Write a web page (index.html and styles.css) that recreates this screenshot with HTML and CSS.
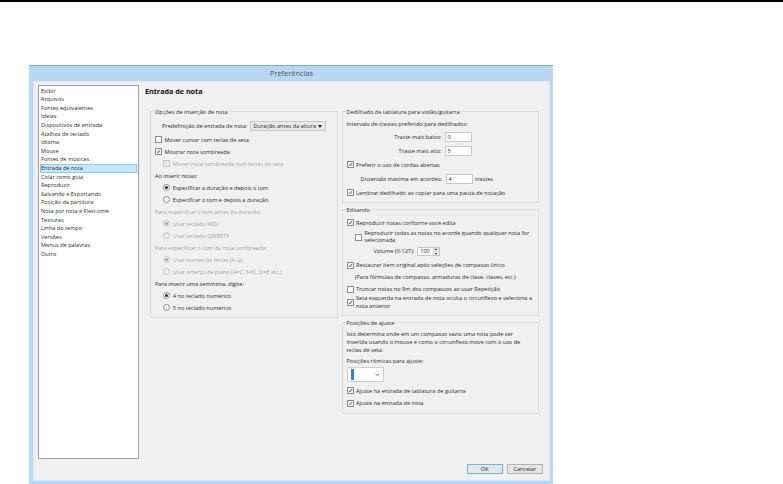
FILE: index.html
```html
<!DOCTYPE html>
<html lang="pt">
<head>
    <meta charset="UTF-8">
    <meta name="viewport" content="width=device-width, initial-scale=1.0">
    <title>Preferências</title>
    <link rel="stylesheet" href="styles.css">
</head>
<body>
    <div class="top-bar"></div>
    <div class="window">
        <div class="title-bar">Preferências</div>
        <div class="client">
            <div class="main">
                <ul class="nav-list">
                    <li>Exibir</li>
                    <li>Arquivos</li>
                    <li>Fontes equivalentes</li>
                    <li>Ideias</li>
                    <li>Dispositivos de entrada</li>
                    <li>Atalhos de teclado</li>
                    <li>Idioma</li>
                    <li>Mouse</li>
                    <li>Fontes de músicas</li>
                    <li class="selected">Entrada de nota</li>
                    <li>Colar como guia</li>
                    <li>Reproduzir</li>
                    <li>Salvando e Exportando</li>
                    <li>Posição da partitura</li>
                    <li>Nota por nota e Flexi-time</li>
                    <li>Texturas</li>
                    <li>Linha do tempo</li>
                    <li>Versões</li>
                    <li>Menus de palavras</li>
                    <li>Outro</li>
                </ul>
                <div class="page">
                    <h1>Entrada de nota</h1>
                    <div class="columns">
                        <fieldset class="group group-left">
                            <legend>Opções de inserção de nota</legend>
                            <div class="row preset-row">
                                <span>Predefinição de entrada de nota:</span>
                                <span class="combo">Duração antes da altura<i class="arrow"></i></span>
                            </div>
                            <div class="row"><span class="check"></span>Mover cursor com teclas de seta</div>
                            <div class="row"><span class="check on"><svg viewBox="0 0 7 7"><path d="M1.4 3.6 2.9 5.2 5.6 1.6"/></svg></span>Mostrar nota sombreada</div>
                            <div class="row indent-1 off"><span class="check"></span>Mover nota sombreada com teclas de seta</div>
                            <div class="row">Ao inserir notas:</div>
                            <div class="row indent-1"><span class="radio on"></span>Especificar a duração e depois o tom</div>
                            <div class="row indent-1"><span class="radio"></span>Especificar o tom e depois a duração</div>
                            <div class="row off">Para especificar o tom antes da duração:</div>
                            <div class="row indent-1 off"><span class="radio on"></span>Usar teclado MIDI</div>
                            <div class="row indent-1 off"><span class="radio"></span>Usar teclado QWERTY</div>
                            <div class="row off">Para especificar o tom da nota sombreada:</div>
                            <div class="row indent-1 off"><span class="radio on"></span>Usar nomes de letras (A-G)</div>
                            <div class="row indent-1 off"><span class="radio"></span>Usar arranjo de piano (A=C, S=D, D=E etc.)</div>
                            <div class="row">Para inserir uma semínima, digite:</div>
                            <div class="row indent-1"><span class="radio on"></span>4 no teclado numérico</div>
                            <div class="row indent-1"><span class="radio"></span>5 no teclado numérico</div>
                        </fieldset>
                        <div class="right-col">
                            <fieldset class="group group-tab">
                                <legend>Dedilhado de tablatura para violão/guitarra</legend>
                                <div class="row">Intervalo de trastes preferido para dedilhados:</div>
                                <div class="row tall field-row"><span>Traste mais baixo:</span><span class="field">0</span></div>
                                <div class="row tall field-row"><span>Traste mais alto:</span><span class="field">5</span></div>
                                <div class="row tall"><span class="check on"><svg viewBox="0 0 7 7"><path d="M1.4 3.6 2.9 5.2 5.6 1.6"/></svg></span>Preferir o uso de cordas abertas</div>
                                <div class="row tall stretch-row"><span>Distensão máxima em acordes:</span><span class="field">4</span><span>trastes</span></div>
                                <div class="row tall"><span class="check on"><svg viewBox="0 0 7 7"><path d="M1.4 3.6 2.9 5.2 5.6 1.6"/></svg></span>Lembrar dedilhado ao copiar para uma pauta de notação</div>
                            </fieldset>
                            <fieldset class="group group-edit">
                                <legend>Editando</legend>
                                <div class="row"><span class="check on"><svg viewBox="0 0 7 7"><path d="M1.4 3.6 2.9 5.2 5.6 1.6"/></svg></span>Reproduzir notas conforme você edita</div>
                                <div class="row wrap indent-2"><span class="check"></span><span>Reproduzir todas as notas no acorde quando qualquer nota for selecionada</span></div>
                                <div class="row volume-row"><span>Volume (0-127):</span><span class="spin">100<i class="spin-btns"></i></span></div>
                                <div class="row"><span class="check on"><svg viewBox="0 0 7 7"><path d="M1.4 3.6 2.9 5.2 5.6 1.6"/></svg></span>Restaurar item original após seleções de compasso único</div>
                                <div class="row note-row">(Para fórmulas de compasso, armaduras de clave, claves, etc.)</div>
                                <div class="row"><span class="check"></span>Truncar notas no fim dos compassos ao usar Repetição</div>
                                <div class="row wrap"><span class="check on"><svg viewBox="0 0 7 7"><path d="M1.4 3.6 2.9 5.2 5.6 1.6"/></svg></span><span>Seta esquerda na entrada de nota oculta o circunflexo e seleciona a nota anterior</span></div>
                            </fieldset>
                            <fieldset class="group group-snap">
                                <legend>Posições de ajuste</legend>
                                <p class="help">Isto determina onde em um compasso vazio uma nota pode ser inserida usando o mouse e como o circunflexo move com o uso de teclas de seta.</p>
                                <div class="row">Posições rítmicas para ajuste:</div>
                                <div class="note-combo">
                                    <span class="note-mark"></span>
                                    <svg class="chevron" viewBox="0 0 6 4"><path d="M.8.8 3 3 5.2.8"/></svg>
                                </div>
                                <div class="row"><span class="check on"><svg viewBox="0 0 7 7"><path d="M1.4 3.6 2.9 5.2 5.6 1.6"/></svg></span>Ajuste na entrada de tablatura de guitarra</div>
                                <div class="row"><span class="check on"><svg viewBox="0 0 7 7"><path d="M1.4 3.6 2.9 5.2 5.6 1.6"/></svg></span>Ajuste na entrada de nota</div>
                            </fieldset>
                        </div>
                    </div>
                </div>
            </div>
            <div class="button-row">
                <span class="btn default">OK</span>
                <span class="btn">Cancelar</span>
            </div>
        </div>
    </div>
</body>
</html>
```

FILE: styles.css
```css
* {
    box-sizing: border-box;
}
html, body {
    height: 100%;
}
body {
    margin: 0;
    background: #fff;
    overflow: hidden;
    font-family: "Open Sans", sans-serif;
    font-size: 5.6px;
    color: #2a2a2a;
}
.top-bar {
    height: 2px;
    background: #000;
}
.window {
    width: 524px;
    height: 419px;
    margin: 63px 0 0 29px;
    background: #b9d7f2;
    border-top: 1px solid #8ba6bf;
    padding: 0 3px 3px 4px;
    display: flex;
    flex-direction: column;
}
.title-bar {
    height: 15px;
    line-height: 15px;
    text-align: center;
    font-size: 7.4px;
    color: #4d5a68;
}
.client {
    flex: 1;
    background: #f0f0f0;
    border: 1px solid #dbe6f0;
    padding: 3px 6px 6px 4px;
    display: flex;
    flex-direction: column;
}
.main {
    flex: 1;
    display: flex;
}
.nav-list {
    list-style: none;
    margin: 0;
    padding: 0.5px 1px;
    width: 100.5px;
    height: 374px;
    background: #fff;
    border: 1px solid #9a9fa6;
}
.nav-list li {
    height: 8.62px;
    line-height: 8.62px;
    padding-left: 1px;
}
.nav-list .selected {
    background: #c9e6f6;
    outline: 1px solid #8ccbe9;
    outline-offset: -1px;
}
.page {
    flex: 1;
    padding-left: 6.5px;
}
h1 {
    margin: 0;
    height: 23px;
    padding-top: 1px;
    font-size: 7.2px;
    line-height: 10px;
    color: #111;
}
.columns {
    display: flex;
    gap: 3.5px;
    padding-left: 5px;
    align-items: flex-start;
}
.group {
    margin: 0;
    min-width: 0;
    padding: 0 4px;
    border: 1px solid #dcdcdc;
}
.group legend {
    margin-left: -1px;
    padding: 0 1px;
    height: 7px;
    line-height: 8px;
}
.group-left {
    width: 188px;
    height: 209.5px;
    padding-top: 4px;
}
.group-left .row {
    height: 12.02px;
}
.right-col {
    width: 197px;
    display: flex;
    flex-direction: column;
    gap: 3px;
}
.group-tab {
    height: 95px;
    padding-top: 2.5px;
}
.group-edit {
    height: 110px;
    padding-top: 3.8px;
}
.group-snap {
    height: 94.5px;
}
.row {
    display: flex;
    align-items: center;
    height: 12px;
    white-space: nowrap;
}
.row.tall {
    height: 14px;
}
.off {
    color: #a3a3a3;
}
.indent-1 {
    padding-left: 8.3px;
}
.indent-2 {
    padding-left: 8.3px;
}
.group-left .preset-row {
    height: 14.5px;
    padding-left: 7px;
    gap: 3px;
}
.check {
    flex: none;
    width: 7px;
    height: 7px;
    margin-right: 2.5px;
    background: #fff;
    border: 1px solid #8a8a8a;
}
.off .check {
    background: #e8e8e8;
    border-color: #c4c4c4;
}
.check svg {
    display: block;
    width: 5px;
    height: 5px;
}
.check path {
    fill: none;
    stroke: #222;
    stroke-width: 1.2;
}
.radio {
    flex: none;
    width: 7px;
    height: 7px;
    margin-right: 2.5px;
    background: #fff;
    border: 1px solid #8a8a8a;
    border-radius: 50%;
    display: flex;
    align-items: center;
    justify-content: center;
}
.off .radio {
    background: #eee;
    border-color: #c4c4c4;
}
.radio.on::after {
    content: "";
    width: 3px;
    height: 3px;
    border-radius: 50%;
    background: #222;
}
.off .radio.on::after {
    background: #a0a0a0;
}
.combo {
    position: relative;
    width: 76px;
    height: 10px;
    line-height: 8px;
    padding-left: 2px;
    background: #e9e9e9;
    border: 1px solid #c8c8c8;
}
.arrow {
    position: absolute;
    right: 3px;
    top: 3px;
    border: 2px solid transparent;
    border-top: 3px solid #222;
    border-bottom: 0;
}
.field-row {
    justify-content: flex-end;
    gap: 3px;
    padding-right: 62px;
}
.field {
    width: 27px;
    height: 10px;
    line-height: 8px;
    padding-left: 2px;
    background: #fff;
    border: 1px solid #c8c8c8;
}
.stretch-row {
    padding-left: 14px;
    gap: 3.5px;
}
.stretch-row span:last-child {
    margin-left: -1px;
}
.wrap {
    height: 15px;
    margin-top: 1px;
    line-height: 7.6px;
    white-space: normal;
}
.group-edit .row:last-child {
    margin-top: 0;
}
.group-edit .volume-row {
    height: 13.4px;
    margin-bottom: 1px;
    padding-left: 27px;
    gap: 3px;
}
.spin {
    position: relative;
    width: 23px;
    height: 9px;
    line-height: 7px;
    padding-left: 2px;
    background: #fff;
    border: 1px solid #c8c8c8;
}
.spin-btns {
    position: absolute;
    right: 0;
    top: 0;
    width: 6px;
    height: 7px;
    background: #e4e4e4;
    border-left: 1px solid #d0d0d0;
}
.spin-btns::before,
.spin-btns::after {
    content: "";
    position: absolute;
    left: 1px;
    border: 1.5px solid transparent;
}
.spin-btns::before {
    top: 0;
    border-top: 0;
    border-bottom: 2px solid #333;
}
.spin-btns::after {
    bottom: 0;
    border-bottom: 0;
    border-top: 2px solid #333;
}
.note-row {
    padding-left: 8.3px;
}
.help {
    margin: 4px 0 0;
    line-height: 8.1px;
}
.group-snap .row {
    height: 12.5px;
}
.note-combo {
    width: 37.5px;
    height: 15.5px;
    margin-bottom: 2px;
    padding: 0 3px 0 3px;
    background: #fff;
    border: 1px solid #d0d0d0;
    display: flex;
    align-items: center;
    justify-content: space-between;
}
.note-mark {
    width: 3.5px;
    height: 11px;
    background: #2f7ee0;
}
.chevron {
    width: 5px;
    height: 3.5px;
}
.chevron path {
    fill: none;
    stroke: #555;
    stroke-width: 1;
}
.button-row {
    display: flex;
    justify-content: flex-end;
    gap: 3.5px;
}
.btn {
    width: 36.5px;
    height: 10.5px;
    line-height: 8.5px;
    text-align: center;
    background: #e6e6e6;
    border: 1px solid #b4b4b4;
}
.btn.default {
    border-color: #6fb2e8;
}
```
